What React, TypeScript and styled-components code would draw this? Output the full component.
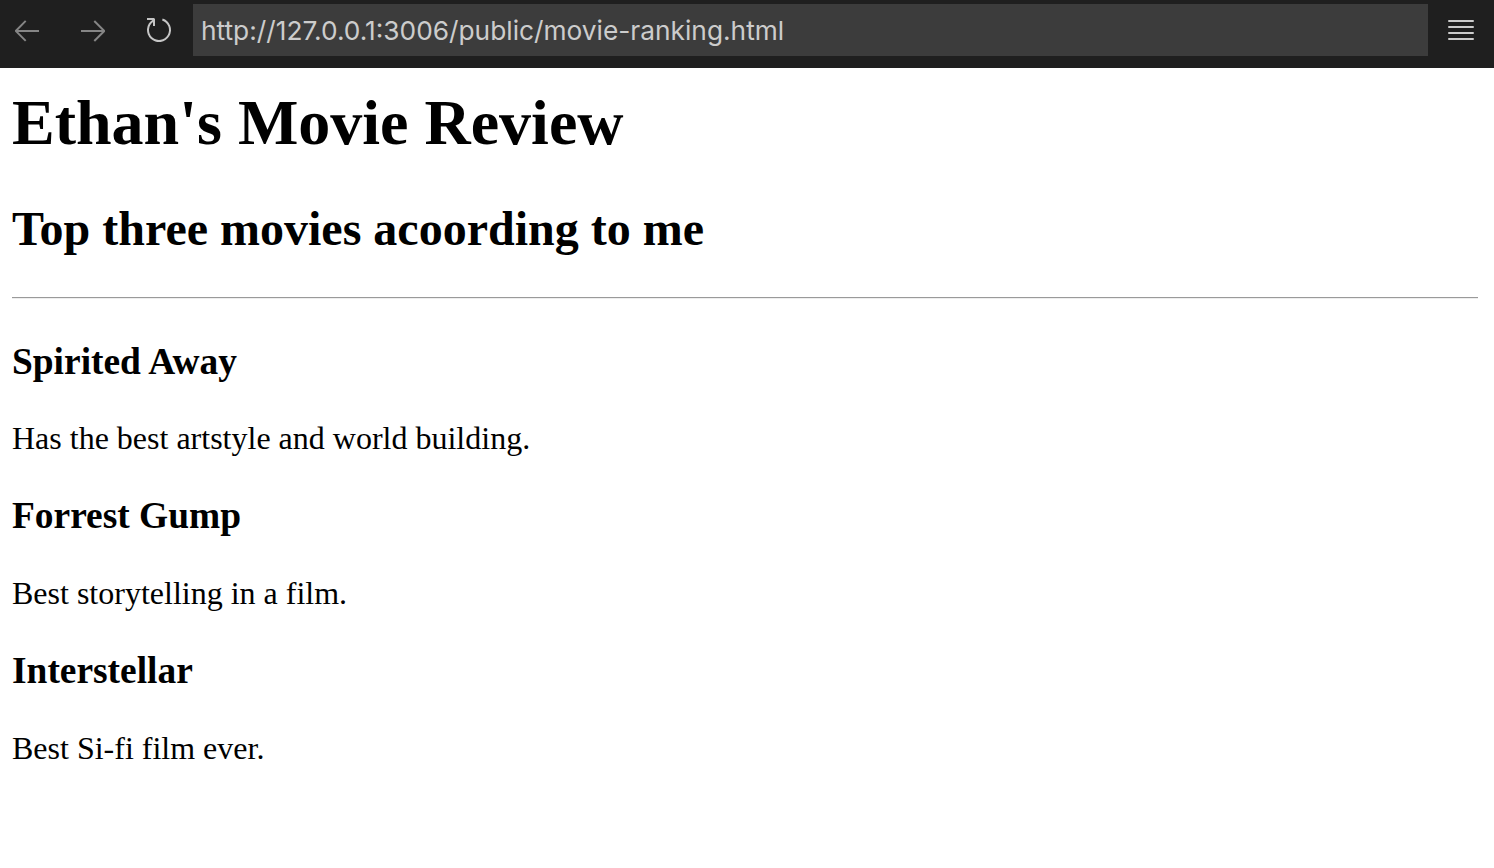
import React from "react";
import styled, { createGlobalStyle } from "styled-components";

const GlobalStyle = createGlobalStyle`
  html, body {
    margin: 0;
    padding: 0;
    background: #ffffff;
  }
  body {
    font-family: "Liberation Serif", "Times New Roman", serif;
    color: #000000;
  }
`;

type Movie = {
  title: string;
  blurb: string;
};

const movies: Movie[] = [
  { title: "Spirited Away", blurb: "Has the best artstyle and world building." },
  { title: "Forrest Gump", blurb: "Best storytelling in a film." },
  { title: "Interstellar", blurb: "Best Si-fi film ever." },
];

const BackIcon = () => (
  <svg width="32" height="32" viewBox="0 0 16 16" fill="currentColor">
    <path
      fillRule="evenodd"
      d="M7 3.093l-5 5V8.8l5 5 .707-.707-4.14-4.141H14V7.951H3.56L7.708 3.8 7 3.093z"
    />
  </svg>
);

const ForwardIcon = () => (
  <svg width="32" height="32" viewBox="0 0 16 16" fill="currentColor">
    <path
      fillRule="evenodd"
      d="M9 13.887l5-5V8.18l-5-5-.707.707 4.146 4.147H2v1.003h10.44L8.292 13.18l.707.707z"
    />
  </svg>
);

const ReloadIcon = () => (
  <svg width="32" height="32" viewBox="0 0 16 16" fill="currentColor">
    <path
      fillRule="evenodd"
      d="M4.681 3H2V2h3.5l.5.5V6H5V4a5 5 0 1 0 4.53-.761l.302-.954A6 6 0 1 1 4.681 3z"
    />
  </svg>
);

const MenuIcon = () => (
  <svg width="26" height="20" viewBox="0 0 26 20" fill="currentColor">
    <rect x="0" y="0" width="26" height="2" rx="1" />
    <rect x="0" y="6" width="26" height="2" rx="1" />
    <rect x="0" y="12" width="26" height="2" rx="1" />
    <rect x="0" y="18" width="26" height="2" rx="1" />
  </svg>
);

export default function App() {
  return (
    <>
      <GlobalStyle />
      <Toolbar>
        <NavGroup>
          <NavButton $dim>
            <BackIcon />
          </NavButton>
          <NavButton $dim>
            <ForwardIcon />
          </NavButton>
          <NavButton>
            <ReloadIcon />
          </NavButton>
        </NavGroup>
        <AddressBar>http://127.0.0.1:3006/public/movie-ranking.html</AddressBar>
        <MenuButton>
          <MenuIcon />
        </MenuButton>
      </Toolbar>
      <Page>
        <Title>Ethan's Movie Review</Title>
        <Subtitle>Top three movies acoording to me</Subtitle>
        <Divider />
        {movies.map((movie) => (
          <React.Fragment key={movie.title}>
            <MovieTitle>{movie.title}</MovieTitle>
            <Blurb>{movie.blurb}</Blurb>
          </React.Fragment>
        ))}
      </Page>
    </>
  );
}

const Toolbar = styled.header`
  display: flex;
  align-items: center;
  height: 68px;
  box-sizing: border-box;
  padding: 4px 0 12px 11px;
  background: #1f1f1f;
`;

const NavGroup = styled.div`
  display: flex;
  align-items: center;
  gap: 34px;
`;

const NavButton = styled.div<{ $dim?: boolean }>`
  display: flex;
  width: 32px;
  height: 32px;
  color: ${(p) => (p.$dim ? "#858585" : "#c5c5c5")};
`;

const AddressBar = styled.div`
  display: flex;
  align-items: center;
  flex: 0 0 1235px;
  height: 52px;
  box-sizing: border-box;
  margin-left: 18px;
  padding-left: 8px;
  background: #3c3c3c;
  color: #cccccc;
  font-family: Inter, "Liberation Sans", sans-serif;
  font-size: 26.3px;
`;

const MenuButton = styled.div`
  display: flex;
  margin-left: 20px;
  color: #cccccc;
`;

const Page = styled.main`
  padding: 0 16px 0 12px;
`;

const Title = styled.h1`
  font-size: 64px;
  font-weight: bold;
  margin: 18px 0 41px;
`;

const Subtitle = styled.h2`
  font-size: 48px;
  font-weight: bold;
  margin: 40px 0 41px;
`;

const Divider = styled.hr`
  height: 0;
  margin: 16px 0 40.5px;
  border: none;
  border-top: 1px solid #9a9a9a;
  border-bottom: 1px solid #eeeeee;
`;

const MovieTitle = styled.h3`
  font-size: 37.44px;
  font-weight: bold;
  margin: 37.44px 0;
`;

const Blurb = styled.p`
  font-size: 32px;
  margin: 32px 0;
`;
